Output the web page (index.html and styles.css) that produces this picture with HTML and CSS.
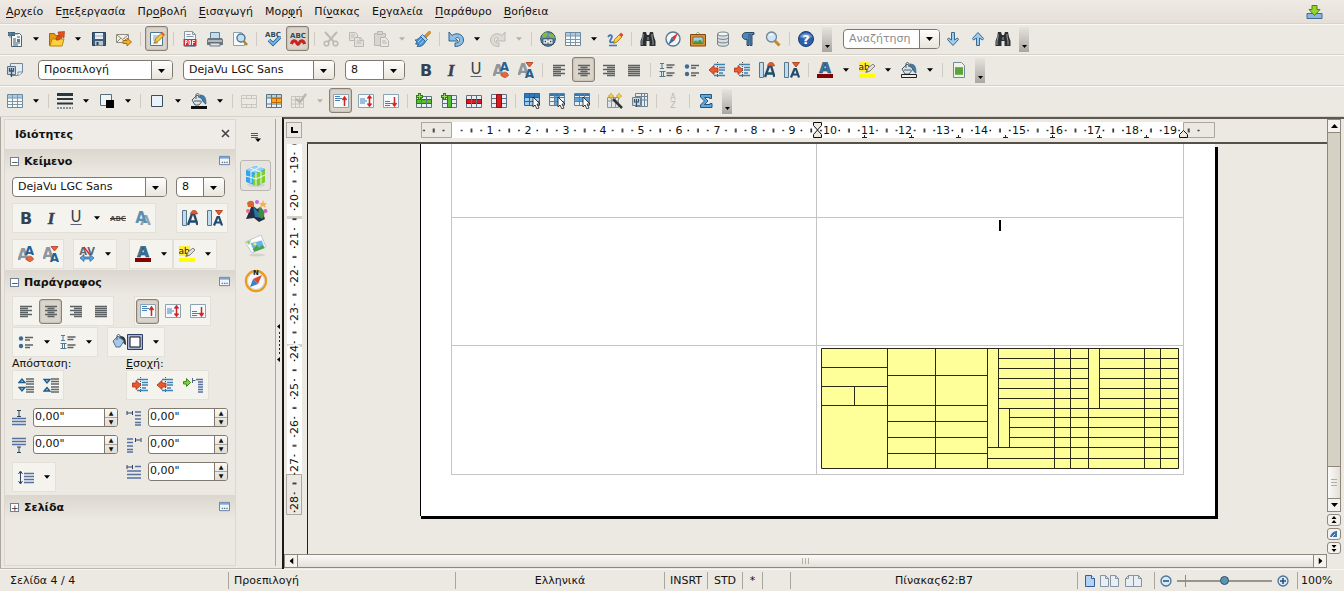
FILE: index.html
```html
<!DOCTYPE html>
<html lang="el">
<head>
<meta charset="utf-8">
<title>Writer</title>
<link rel="stylesheet" href="styles.css">
</head>
<body>
<svg class="sprite" aria-hidden="true">
<symbol id="arr" viewBox="0 0 7 4"><path d="M0 0h7L3.500 4z"/></symbol>
<symbol id="new" viewBox="0 0 16 16"><path d="M4.500 2.500h8l2 2v11h-10z" fill="#f4f8fa" stroke="#4b6272"/><path d="M1 1h7v4H1z" fill="#3f5e75"/><path d="M1 3h10M3 1v6" stroke="#6f8ca0"/><path d="M6 8h3M6 10h3M6 12h7M10 6h3M6 14h5" stroke="#44586a"/><path d="M10 8h3v3h-3z" fill="#4d7ea5"/></symbol>
<symbol id="open" viewBox="0 0 16 16"><path d="M.5 2.500h5l1 2h6v10h-12z" fill="#e59a15" stroke="#a86408"/><path d="M3 8h12l-2 7H1z" fill="#fcd13c" stroke="#c0820c"/><path d="M7 9c0-3 1-4 4-4L9.500 3.500 9 1l6.500-.5L15 7l-2-1.500-3 3.500z" fill="#e2521c" stroke="#a8300c" stroke-width=".6"/></symbol>
<symbol id="save" viewBox="0 0 16 16"><path d="M1.500 1.500h13v13h-13z" fill="#3f5e7b" stroke="#26415a"/><path d="M4 2h8v6H4z" fill="#e8eef2"/><path d="M4 10h8v4.500H4z" fill="#b9c6cf"/><path d="M5.500 11h2v3h-2z" fill="#2c4358"/><path d="M4 5h8" stroke="#9db2c2"/></symbol>
<symbol id="mail" viewBox="0 0 16 16"><path d="M.5 3.500h12v8H.5z" fill="#f3f0e6" stroke="#8a8a80"/><path d="M1 4l5.500 4.500L12 4M1 11l4-4M12 11L8.500 7.500" fill="none" stroke="#8a8a80"/><path d="M7 9.500h4V7l4.500 4-4.500 4v-2.500H7z" fill="#f5ae28" stroke="#ad6d08"/></symbol>
<symbol id="edit" viewBox="0 0 16 16"><path d="M1.500 1.500h12v13h-12z" fill="#f7fafc" stroke="#4f7492"/><path d="M4 5h7M4 7h5M4 9h3M4 12h5" stroke="#7da3be"/><path d="M5.500 12l1-4 6-6 2.500 2.500-6 6z" fill="#f8c93a" stroke="#946610" stroke-width=".8"/><path d="M12 3l1.500-2L16 3.500 14 5z" fill="#e4603c"/></symbol>
<symbol id="pdf" viewBox="0 0 16 16"><path d="M2.500.5h8l3 3v12h-11z" fill="#f5f7f8" stroke="#8598a5"/><path d="M10.500.5v3h3M4.500 3.500h4M4.500 5.500h7" stroke="#8598a5" fill="none"/><path d="M1.500 8h13v7h-13z" fill="#dc2a32"/><path d="M3.500 14V9.500h1.500v2H3.500M7 9.500v4h1.500v-4zM10.500 14V9.500H13M10.500 11.500h2" fill="none" stroke="#fff" stroke-width=".9"/></symbol>
<symbol id="print" viewBox="0 0 16 16"><path d="M3.500 1.500h9v7h-9z" fill="#c4dcec" stroke="#5f7f95"/><path d="M1 7h14l1 2v5H0V9z" fill="#6c7780"/><path d="M1 9h14v2H1z" fill="#b3babf"/><path d="M3 12h10v3H3z" fill="#dfe3e5" stroke="#525d66" stroke-width=".8"/></symbol>
<symbol id="preview" viewBox="0 0 16 16"><path d="M1.500 1.500h8l3 3v10h-11z" fill="#f8fafb" stroke="#8da1af"/><circle cx="9" cy="7" r="4" fill="#bfe0f5" stroke="#53748d" stroke-width="1.400"/><path d="M11.500 10l3.500 4" stroke="#b98224" stroke-width="2.600"/></symbol>
<symbol id="spell" viewBox="0 0 16 16"><text x="8" y="6" class="g" font-size="7" fill="#34495c">ABC</text><path d="M4 9l4 4 7-7" fill="none" stroke="#275f96" stroke-width="3.500"/><path d="M4 9l4 4 7-7" fill="none" stroke="#77b7e8" stroke-width="1.800"/></symbol>
<symbol id="autospell" viewBox="0 0 16 16"><text x="8" y="7" class="g" font-size="7" fill="#34495c">ABC</text><path d="M1.500 13c1-4 4-4 5-1.500s2 2.500 3 0 4-2.500 5 1.500" fill="none" stroke="#c72520" stroke-width="3.200"/></symbol>
<symbol id="cut" viewBox="0 0 16 16"><path d="M2 1l9 10M14 1L5 11" stroke="#bdbab4" stroke-width="2"/><circle cx="3.500" cy="12.500" r="2.300" fill="none" stroke="#bdbab4" stroke-width="1.600"/><circle cx="12.500" cy="12.500" r="2.300" fill="none" stroke="#bdbab4" stroke-width="1.600"/></symbol>
<symbol id="copy" viewBox="0 0 16 16"><g fill="#e4e1dc" stroke="#bcb9b3"><path d="M1.500 1.500h6l2 2v6h-8z"/><path d="M6.500 6.500h6l3 3v6h-9z"/><path d="M3 4h4M3 6h3M8.500 10h4M8.500 12h5M12 6.500v3h3"/></g></symbol>
<symbol id="paste" viewBox="0 0 16 16"><g fill="#d8d5cf" stroke="#b9b6b0"><path d="M1.500 2.500h11v12h-11z"/><path d="M4.500.5h5v3h-5z"/><path d="M7.500 6.500h5l3 3v6h-8z" fill="#eae8e3"/><path d="M9 10h4M9 12h5"/></g></symbol>
<symbol id="brush" viewBox="0 0 16 16"><path d="M14.500 0l1.500 1.500-4.500 5L9.500 4.500z" fill="#e09a28" stroke="#925e10" stroke-width=".6"/><path d="M7.500 3.500l5 5-2 2L5.500 5.500z" fill="#a8cfec" stroke="#28598c" stroke-width=".8"/><path d="M5.500 5.500l5 5C9 14 6 16 2 15.500l1.500-2L.5 13l1.500-2-2-2c2 0 4-1.500 5.500-3.500z" fill="#4a94d4" stroke="#235587" stroke-width=".8"/><path d="M3 11l3.500-3.500M5 13.500l3.500-4" stroke="#a6d0f2"/></symbol>
<symbol id="undo" viewBox="0 0 16 16"><path d="M1 1v9h9L7.500 7.500C9.500 5.500 12 7 11.500 9.500c-.5 2-2 2.500-4.500 2.500V15.500c5 0 8.500-2.500 8.500-6.500 0-6-7.500-8-11.500-4.500z" fill="#8bbfe5" stroke="#2d638f"/></symbol>
<symbol id="redo" viewBox="0 0 16 16"><path d="M15 1v9H6l2.500-2.500C6.500 5.500 4 7 4.500 9.500c.5 2 2 2.500 4.500 2.500V15.500C4 15.500.5 13 .5 9c0-6 7.500-8 11.500-4.500z" fill="#dedbd5" stroke="#bdbab4"/></symbol>
<symbol id="globe" viewBox="0 0 16 16"><circle cx="8" cy="8" r="7.300" fill="#5e91b8" stroke="#284b64"/><path d="M2 4c3-4 5-3 6-1L6 6 3 7zM9 3l4 0 2 4-3 0-3-2z" fill="#88b83e"/><path d="M2.500 7.500h11v6h-11z" fill="#2d3b45"/><path d="M4 9h3v3H4zM9 9h3v3H9zM6 10.500h4" fill="none" stroke="#e7ecef" stroke-width="1.300"/></symbol>
<symbol id="table" viewBox="0 0 16 16"><path d="M.5 1.500h15v13H.5z" fill="#f7fafc" stroke="#6d889c"/><path d="M1 2h14v3H1z" fill="#a9cbe8"/><path d="M.5 5h15M.5 8.500h15M.5 11.500h15M5.500 2v12M10.500 2v12" stroke="#7d96a8"/></symbol>
<symbol id="draw" viewBox="0 0 16 16"><path d="M1 6c3-4 5-1 3 2s-1 4 3 3" fill="none" stroke="#3977b5" stroke-width="1.800"/><path d="M2 14.500h8" stroke="#3977b5" stroke-width="1.500"/><path d="M6.500 12.500l1-4 5-5 2.500 2.500-5 5z" fill="#fbcf43" stroke="#9c6c12" stroke-width=".8"/><path d="M12 4l2-2.500L16.500 4 14.500 6z" fill="#dd4736"/></symbol>
<symbol id="bino" viewBox="0 0 16 16"><path d="M3 1h3l1 3h2l1-3h3l1 5 1.500 4v5H9.500v-5h-3v5H.5v-5L2 6z" fill="#2c3032"/><path d="M3 3v3l-1 4v4M12 3v3l1 4v4" stroke="#9ba0a3" fill="none"/><path d="M7 6h2v3H7z" fill="#666c70"/></symbol>
<symbol id="compass" viewBox="0 0 16 16"><circle cx="8" cy="8" r="7" fill="#f2f6f9" stroke="#5b7890" stroke-width="1.400"/><path d="M13 2L9.500 9.500 6.500 6.500z" fill="#dc342b"/><path d="M3 14l3.500-7.500 3 3z" fill="#356ca5"/></symbol>
<symbol id="gallery" viewBox="0 0 16 16"><path d="M5 4l3-3 3 3" fill="none" stroke="#a9aaa6"/><path d="M.5 3.500h15v11.500H.5z" fill="#dd932b" stroke="#7d480c"/><path d="M3 6h10v6.500H3z" fill="#9bd0f2" stroke="#744c1c" stroke-width=".7"/><path d="M3.500 12c1-3 3-3 4-1 2-4 4-2 5 1z" fill="#4d9a36"/></symbol>
<symbol id="db" viewBox="0 0 16 16"><path d="M2.500 3v10c0 3 11 3 11 0V3z" fill="#d9dee1" stroke="#78838b"/><ellipse cx="8" cy="3" rx="5.500" ry="2" fill="#f3f5f6" stroke="#78838b"/><path d="M2.500 6.500c0 2.500 11 2.500 11 0M2.500 10c0 2.500 11 2.500 11 0" fill="none" stroke="#78838b"/></symbol>
<symbol id="pil" viewBox="0 0 16 16"><path d="M14 1.500H6c-5 0-5 7 0 7h1v6h2v-11h1v11h2v-11h2z" fill="#4f86b5" stroke="#294c6b"/></symbol>
<symbol id="zoom" viewBox="0 0 16 16"><path d="M10 10l4.500 4.500" stroke="#c08a28" stroke-width="3"/><circle cx="6.500" cy="6" r="5" fill="#cfe5f6" stroke="#6d8596" stroke-width="1.300"/><path d="M4 5c1-2 3-2 4-1" fill="none" stroke="#fff"/></symbol>
<symbol id="help" viewBox="0 0 16 16"><circle cx="8" cy="8" r="7.500" fill="#2c5fa9" stroke="#173b74"/><path d="M2 6c1-5 11-5 12 0-3 2-9 2-12 0z" fill="#6993cb"/><text x="8" y="13" class="g" font-size="13" fill="#fff">?</text></symbol>
<symbol id="down" viewBox="0 0 16 16"><path d="M6.500 1.500h3v7.500l3-2 1 1.500L8 14.500 2.500 8.500l1-1.500 3 2z" fill="#a1cbea" stroke="#376992"/></symbol>
<symbol id="up" viewBox="0 0 16 16"><path d="M6.500 14.500h3V7l3 2 1-1.500L8 1.500 2.500 7.500l1 1.500 3-2z" fill="#a1cbea" stroke="#376992"/></symbol>
<symbol id="styles" viewBox="0 0 16 16"><path d="M3.500 1.500h12v9l-4 3h-8z" fill="#e6edf2" stroke="#73889a"/><path d="M15 10h-4v4" fill="#fff" stroke="#73889a"/><path d="M.5 4.500h8v8h-8z" fill="#c5d4df" stroke="#5b7488"/><path d="M2.500 6v3h4V6M4.500 6v9" fill="none" stroke="#395266" stroke-width="1.300"/></symbol>
<symbol id="bold" viewBox="0 0 16 16"><text x="8" y="14" class="g" font-size="16" fill="#34424f">B</text></symbol>
<symbol id="italic" viewBox="0 0 16 16"><text x="8" y="14" class="gi" font-size="17" fill="#34424f" stroke="#34424f" stroke-width=".5">I</text></symbol>
<symbol id="uline" viewBox="0 0 16 16"><text x="8" y="12" class="gn" font-size="15" fill="#34424f">U</text><path d="M2.500 14.500h11" stroke="#5d6670"/></symbol>
<symbol id="grow" viewBox="0 0 16 16"><text x="5" y="14" class="g" font-size="15" fill="#8d969d">A</text><text x="11.500" y="9" class="g" font-size="12" fill="#25608f">A</text><path d="M8 13.500c1-4.500 6.500-4.500 7.500 0L11.800 16z" fill="#e8643a" stroke="#b2391a" stroke-width=".6"/></symbol>
<symbol id="shrink" viewBox="0 0 16 16"><text x="5" y="13" class="g" font-size="15" fill="#8d969d">A</text><text x="11.500" y="15.500" class="g" font-size="12" fill="#25608f">A</text><path d="M8 .5h7L11.500 5z" fill="#e8643a" stroke="#b2391a" stroke-width=".8"/></symbol>
<symbol id="alL" viewBox="0 0 16 16"><path d="M2 3.500h12M2 5.500h8M2 7.500h12M2 9.500h8M2 11.500h12M2 13.500h8" stroke="#5c6164" stroke-width="1.300"/></symbol>
<symbol id="alC" viewBox="0 0 16 16"><path d="M2 3.500h12M4.500 5.500h7M2 7.500h12M4.500 9.500h7M2 11.500h12M4.500 13.500h7" stroke="#5c6164" stroke-width="1.300"/></symbol>
<symbol id="alR" viewBox="0 0 16 16"><path d="M2 3.500h12M6 5.500h8M2 7.500h12M6 9.500h8M2 11.500h12M6 13.500h8" stroke="#5c6164" stroke-width="1.300"/></symbol>
<symbol id="alJ" viewBox="0 0 16 16"><path d="M2 3.500h12M2 5.500h12M2 7.500h12M2 9.500h12M2 11.500h12M2 13.500h12" stroke="#5c6164" stroke-width="1.300"/></symbol>
<symbol id="num" viewBox="0 0 16 16"><path d="M1 1.500h4M1 6.500h4M3 1.500v5M.5 9.500h6M.5 14.500h6M2.500 9.500v5M4.500 9.500v5" stroke="#52798f"/><path d="M7.500 3h8M7.500 5.500h6M7.500 11h8M7.500 13.500h6" stroke="#5c6164" stroke-width="1.300"/></symbol>
<symbol id="bul" viewBox="0 0 16 16"><circle cx="3" cy="4.500" r="2.200" fill="#3d6c92"/><circle cx="3" cy="12" r="2.200" fill="#3d6c92"/><path d="M7 3.500h8M7 6h5M7 11h8M7 13.500h5" stroke="#5c6164" stroke-width="1.300"/></symbol>
<symbol id="indL" viewBox="0 0 16 16"><path d="M5 2.500h11M10 5.500h6M10 8h6M10 11h4M5 13.500h11" stroke="#3c84b8" stroke-width="1.600"/><path d="M8.500 0v16" stroke="#4c5961" stroke-dasharray="1 1"/><path d="M0 8l5-4.500v2.500h4v4H5v2.500z" fill="#e65b35" stroke="#a8320f" stroke-width=".8"/></symbol>
<symbol id="indR" viewBox="0 0 16 16"><path d="M5 2.500h11M10 5.500h6M10 8h6M10 11h4M5 13.500h11" stroke="#3c84b8" stroke-width="1.600"/><path d="M8.500 0v16" stroke="#4c5961" stroke-dasharray="1 1"/><path d="M9 8L4 3.500v2.500H.5v4H4v2.500z" fill="#e65b35" stroke="#a8320f" stroke-width=".8"/></symbol>
<symbol id="spU" viewBox="0 0 16 16"><path d="M.5.500h4v15h-4z" fill="#c2dcef" stroke="#58768c"/><path d="M6 15l4-11h2l3.500 11M8 11.500h6" fill="none" stroke="#214c6e" stroke-width="2.400"/><path d="M8.500 4c1-5 6-5 7 0z" fill="#e65b35" stroke="#a8320f" stroke-width=".6"/></symbol>
<symbol id="spD" viewBox="0 0 16 16"><path d="M.5.500h4v15h-4z" fill="#c2dcef" stroke="#58768c"/><path d="M7 15.500L10.500 7h1.500l3 8.500M8.500 12.500h5" fill="none" stroke="#214c6e" stroke-width="2.200"/><path d="M8.500.5h7L12 5z" fill="#e65b35" stroke="#a8320f" stroke-width=".8"/></symbol>
<symbol id="fcol" viewBox="0 0 16 16"><text x="8" y="11" class="g" font-size="15" fill="#3b759f" stroke="#21425d" stroke-width=".6">A</text><path d="M0 12h16v4H0z" fill="#860000"/></symbol>
<symbol id="hl" viewBox="0 0 16 16"><path d="M0 0h11v10H0z" fill="#ffee32"/><text x="5" y="8" class="gn" font-size="9" fill="#222">ab</text><path d="M7 10l2-4 5-4 2 2-5 5z" fill="#d9e1e6" stroke="#6f6650" stroke-width=".8"/><path d="M6 11l2-3 2 2z" fill="#9b7625"/><path d="M0 12h16v4H0z" fill="#ff0"/></symbol>
<symbol id="bucket" viewBox="0 0 16 16"><path d="M9 2c5 0 6 3 6 9-2 0-3-4-6-7z" fill="#3c7eb0" stroke="#275274" stroke-width=".6"/><path d="M1 7l5-5 6 5-4 5H4z" fill="#d8e3ea" stroke="#4a5c69"/><path d="M5 6V2c0-2 3-2 3 0v3M3 8h7" fill="none" stroke="#4a5c69"/><path d="M.5 12.500h15v3H.5z" fill="#eee" stroke="#222"/></symbol>
<symbol id="bucketb" viewBox="0 0 16 16"><path d="M9 2c5 0 6 3 6 9-2 0-3-4-6-7z" fill="#3c7eb0" stroke="#275274" stroke-width=".6"/><path d="M1 7l5-5 6 5-4 5H4z" fill="#d8e3ea" stroke="#4a5c69"/><path d="M5 6V2c0-2 3-2 3 0v3M3 8h7" fill="none" stroke="#4a5c69"/><path d="M0 13h16v3H0z" fill="#111"/></symbol>
<symbol id="doc" viewBox="0 0 16 16"><path d="M2.500.5h8l3 3v12h-11z" fill="#edf4ec" stroke="#6f8d94"/><path d="M4 5h8v8H4z" fill="#77b850"/><path d="M4 7h8M4 9h8M4 11h8" stroke="#498d29"/></symbol>
<symbol id="bst" viewBox="0 0 16 16"><path d="M0 1.500h16" stroke="#29373f" stroke-width="3"/><path d="M0 6h16M0 10.500h16" stroke="#29373f" stroke-width="2"/><path d="M0 15h16" stroke="#29373f" stroke-dasharray="2 1"/></symbol>
<symbol id="bcol" viewBox="0 0 16 16"><path d="M1.500 1.500h11v11h-11z" fill="#eff4f7" stroke="#5a6f7e"/><path d="M7 7h8v8H7z"/></symbol>
<symbol id="box" viewBox="0 0 16 16"><path d="M2.500 2.500h11v11h-11z" fill="#eaf1f8" stroke="#394e5e"/></symbol>
<symbol id="merge" viewBox="0 0 16 16"><g fill="none" stroke="#c9c6c0"><path d="M.5 2.500h15v12H.5zM.5 5.500h15M.5 11.500h15M5.500 2v4M10.500 2v4M5.500 11v4M10.500 11v4"/></g></symbol>
<symbol id="split" viewBox="0 0 16 16"><path d="M.5 1.500h15v13H.5z" fill="#e8f0f6" stroke="#5d7484"/><path d="M1 2h14v3H1z" fill="#b7cfdf"/><path d="M5.500 2v12M10.500 2v12M.5 5h15M.5 11h15" stroke="#5d7484"/><path d="M5.500 5.500h10v4h-10z" fill="#ffa51d" stroke="#ba6c00"/><path d="M10.500 5v5" stroke="#ba6c00"/></symbol>
<symbol id="opt" viewBox="0 0 16 16"><path d="M.5 3.500h12v11H.5zM.5 7h12M.5 11h12M4.500 4v10M8.500 4v10" fill="none" stroke="#c6c3bd"/><path d="M5 6l4 3 6-8" fill="none" stroke="#b9b6b0" stroke-width="2.500"/></symbol>
<symbol id="vt" viewBox="0 0 16 16"><path d="M.5 1.500h15v13H.5z" fill="#f6fafc" stroke="#8ea3b2"/><path d="M2 3.500h5M2 5.500h7M2 7.500h5" stroke="#4382bd"/><path d="M11.500 13V5M9.500 7l2-3 2 3" fill="none" stroke="#d22424" stroke-width="1.500"/></symbol>
<symbol id="vm" viewBox="0 0 16 16"><path d="M.5 1.500h15v13H.5z" fill="#f6fafc" stroke="#8ea3b2"/><path d="M2 6h5M2 8h7M2 10h5" stroke="#4382bd"/><path d="M11.500 13V3M9.500 5.500l2-2.500 2 2.500M9.500 10.500l2 2.500 2-2.500" fill="none" stroke="#d22424" stroke-width="1.500"/></symbol>
<symbol id="vb" viewBox="0 0 16 16"><path d="M.5 1.500h15v13H.5z" fill="#f6fafc" stroke="#8ea3b2"/><path d="M2 8.500h5M2 10.500h7M2 12.500h5" stroke="#4382bd"/><path d="M11.500 4v8M9.500 10l2 3 2-3" fill="none" stroke="#d22424" stroke-width="1.500"/></symbol>
<symbol id="ir" viewBox="0 0 16 16"><path d="M.5 3.500h15v11H.5z" fill="#e7eff4" stroke="#60727e"/><path d="M.5 6.500h15v4H.5z" fill="#56bd31" stroke="#277811"/><path d="M5.500 4v11M10.500 4v11" stroke="#60727e"/><path d="M0 3.500h7M3.500 0v7" stroke="#2c7d12" stroke-width="3"/><path d="M1 3.500h5M3.500 1v5" stroke="#93dd55"/></symbol>
<symbol id="ic" viewBox="0 0 16 16"><path d="M1.500 2.500h14v12h-14z" fill="#e7eff4" stroke="#60727e"/><path d="M1 6.500h14M1 10.500h14" stroke="#60727e"/><path d="M6.500 2.500h4v12h-4z" fill="#56bd31" stroke="#277811"/><path d="M0 3.500h7M3.500 0v7" stroke="#2c7d12" stroke-width="3"/><path d="M1 3.500h5M3.500 1v5" stroke="#93dd55"/></symbol>
<symbol id="dr" viewBox="0 0 16 16"><path d="M.5 2.500h15v12H.5z" fill="#e7eff4" stroke="#60727e"/><path d="M.5 6.500h15v4H.5z" fill="#d81a21" stroke="#8e0d12"/><path d="M5.500 3v11M10.500 3v11" stroke="#60727e"/></symbol>
<symbol id="dc" viewBox="0 0 16 16"><path d="M.5 1.500h15v13H.5z" fill="#e7eff4" stroke="#60727e"/><path d="M1 5.500h14M1 10.500h14" stroke="#60727e"/><path d="M5.500 1.500h5v13h-5z" fill="#d81a21" stroke="#8e0d12"/></symbol>
<symbol id="st" viewBox="0 0 16 16"><path d="M.5.500h15v12H.5z" fill="#9fcbee" stroke="#24639d"/><path d="M1 1h14v3H1z" fill="#2e79bc"/><path d="M1 4.500h14M1 8.500h14M5.500 1v12M10.500 1v12" stroke="#24639d"/><path d="M9 4v10l2-2 2 4 2-1-2-4h3z" fill="#fff" stroke="#111" stroke-width=".8"/></symbol>
<symbol id="sc" viewBox="0 0 16 16"><path d="M.5.500h15v12H.5z" fill="#e9f0f5" stroke="#607e95"/><path d="M5 1h6v11H5z" fill="#5ca4dc"/><path d="M1 1h14v2H1z" fill="#2e79bc"/><path d="M1 4.500h14M1 8.500h14M5.500 1v12M10.500 1v12" stroke="#607e95"/><path d="M9 4v10l2-2 2 4 2-1-2-4h3z" fill="#fff" stroke="#111" stroke-width=".8"/></symbol>
<symbol id="sr" viewBox="0 0 16 16"><path d="M.5.500h15v12H.5z" fill="#e9f0f5" stroke="#607e95"/><path d="M1 1h14v2H1z" fill="#2e79bc"/><path d="M1 5h14v4H1z" fill="#5ca4dc"/><path d="M1 4.500h14M1 8.500h14M5.500 1v12M10.500 1v12" stroke="#607e95"/><path d="M9 4v10l2-2 2 4 2-1-2-4h3z" fill="#fff" stroke="#111" stroke-width=".8"/></symbol>
<symbol id="wand" viewBox="0 0 16 16"><path d="M.5 4.500h11v10H.5z" fill="#e0e5e8" stroke="#8797a3"/><path d="M1 8h11M4.500 5v9M8.500 5v9" stroke="#8797a3"/><path d="M6 6l9 9" stroke="#333" stroke-width="2.500"/><path d="M4 0l1 2 2 1-2 1-1 2-1-2-2-1 2-1zM12 0l1 2 2 1-2 1-1 2-1-2-2-1 2-1z" fill="#f8cf3b" stroke="#c38f0e" stroke-width=".5"/></symbol>
<symbol id="tp" viewBox="0 0 16 16"><path d="M3.500.500h12v13h-12z" fill="#e5edf3" stroke="#6c8293"/><path d="M4 3.500h11M4 7h11M9.500 1v12M12.500 1v12" stroke="#6c8293"/><path d="M.5 4.500h8v8h-8z" fill="#cbd8e1" stroke="#6c8293"/><path d="M2.500 6v3h4V6M4.500 6v8" fill="none" stroke="#395266" stroke-width="1.200"/></symbol>
<symbol id="az" viewBox="0 0 16 16"><text x="8" y="7" class="gn" font-size="8" fill="#b9b6b0">A</text><text x="8" y="15" class="gn" font-size="8" fill="#b9b6b0">Z</text></symbol>
<symbol id="sigma" viewBox="0 0 16 16"><path d="M2.500 1.500h11v4h-2v-1H6.500L10 8l-3.500 3.500H12v-1h2v4H2.500v-2.500L6.500 8 2.500 4z" fill="#5fa9dc" stroke="#1f5785"/></symbol>
<symbol id="strike" viewBox="0 0 16 16"><text x="8" y="11" class="g" font-size="7" fill="#555">ABC</text><path d="M0 8.500h16" stroke="#333"/></symbol>
<symbol id="shad" viewBox="0 0 16 16"><text x="10.500" y="15" class="g" font-size="14" fill="#8fa2b0">A</text><text x="6" y="13" class="g" font-size="15" fill="#5a8fb5">A</text></symbol>
<symbol id="av" viewBox="0 0 16 16"><text x="4" y="9" class="g" font-size="10" fill="#606a72">A</text><text x="12" y="9" class="g" font-size="10" fill="#606a72">V</text><path d="M5 1l6 8" stroke="#d6282f" stroke-width="1.300"/><path d="M1 12l4-3.500V11h6V8.500l4 3.500-4 3.500V13H5v2.500z" fill="#5ba4dc" stroke="#235f92" stroke-width=".7"/></symbol>
<symbol id="bg" viewBox="0 0 32 16"><path d="M8 2c5 0 6 3 6 9-2 0-3-4-6-7z" fill="#263746"/><path d="M1 7l5-5 6 5-4 6H4z" fill="#a8c6e6" stroke="#4d7199"/><path d="M5 6V2c0-2 3-2 3 0v3" fill="none" stroke="#4a5c69"/><path d="M15.500.5h15v15h-15z" fill="#a9b6d6" stroke="#2c3d66"/><path d="M18 3h10v10H18z" fill="#fff" stroke="#111"/></symbol>
<symbol id="psi" viewBox="0 0 16 16"><path d="M8 2h8M8 4.500h8M8 7h8M8 10h8M8 12.500h8M8 15h8" stroke="#63686c" stroke-width="1.300"/><path d="M1 5.500L4 2l3 3.500zM1 10.500h6L4 14z" fill="#9cc7e8" stroke="#205b8c" stroke-width="1.300"/></symbol>
<symbol id="psd" viewBox="0 0 16 16"><path d="M8 2h8M8 4.500h8M8 7h8M8 10h8M8 12.500h8M8 15h8" stroke="#63686c" stroke-width="1.300"/><path d="M1 2.500h6L4 6zM1 14l3-3.500L7 14z" fill="#9cc7e8" stroke="#205b8c" stroke-width="1.300"/></symbol>
<symbol id="hang" viewBox="0 0 20 16"><path d="M.5 4.500h3V1.500l4 4-4 4V7h-3z" fill="#83cf45" stroke="#3b8a16"/><path d="M9.500 1v5M9.500 3.500h3" stroke="#4d6685"/><path d="M13 2.500h7M15 5h5M15 7.500h5M15 10h5M15 12.500h5M15 15h5" stroke="#5471a0" stroke-width="1.500"/></symbol>
<symbol id="fab" viewBox="0 0 16 16"><path d="M1 8.500h14M1 11.500h14M1 14.500h14" stroke="#5471a0" stroke-width="1.700"/><path d="M6 .5h4M6 6.500h4M8 0v7" stroke="#2e4468"/></symbol>
<symbol id="fbe" viewBox="0 0 16 16"><path d="M1 1.500h14M1 4.500h14M1 7.500h14" stroke="#5471a0" stroke-width="1.700"/><path d="M6 10h4M6 15.500h4M8 10v6" stroke="#2e4468"/></symbol>
<symbol id="fle" viewBox="0 0 16 16"><path d="M9 2h6M9 5.500h6M9 9h6M9 12.500h6M9 15h6" stroke="#5471a0" stroke-width="1.500"/><path d="M1 1v4M6.500 1v4M1 3h5" stroke="#2e4468"/></symbol>
<symbol id="fri" viewBox="0 0 16 16"><path d="M1 2h6M1 5.500h6M1 9h6M1 12.500h6M1 15h6" stroke="#5471a0" stroke-width="1.500"/><path d="M9.500 1v4M15 1v4M9.500 3h5" stroke="#2e4468"/></symbol>
<symbol id="ffi" viewBox="0 0 16 16"><path d="M9 2.500h6M1 7h14M1 10.500h14M1 14h14" stroke="#5471a0" stroke-width="1.500"/><path d="M1 1v4M6.500 1v4M1 3h5" stroke="#2e4468"/></symbol>
<symbol id="lsp" viewBox="0 0 16 16"><path d="M6 4.500h10M6 7.500h10M6 10.500h10M6 13.500h10" stroke="#5471a0" stroke-width="1.600"/><path d="M2.500 3v11M.5 5l2-3 2 3M.5 12l2 3 2-3" fill="none" stroke="#2e4468"/></symbol>
<symbol id="dlg" viewBox="0 0 12 12"><path d="M.5 1.500h11v9H.5z" fill="#f1f5fb" stroke="#5879a8"/><path d="M1 2h10v2H1z" fill="#7ea5d8"/><path d="M3 8h1.500M5.500 8H7M8 8h1.500" stroke="#345"/></symbol>
<symbol id="upd" viewBox="0 0 16 16"><path d="M.5 9.500h15v5H.5z" fill="#8db5da" stroke="#416894"/><path d="M5.500 1.500h5v4h3L8 11.500 2.500 5.500h3z" fill="#96d32c" stroke="#4b8609"/></symbol>
<symbol id="cube" viewBox="0 0 24 24"><ellipse cx="12" cy="21" rx="9" ry="2" fill="#d5d2cc"/><path d="M2 6l9-4 10 3v13l-8 4-11-4z" fill="#36a5e8"/><path d="M12 9l9-3v12l-9 4-3-1v-9z" fill="#7ed028"/><path d="M2 6l9-4 10 3-9 4z" fill="#8fd4f8"/><path d="M2 12l10 3 9-4M12 9v13M7 7v12M6 4l11 4v12M16 3L7 7.500" fill="none" stroke="#f0f8fa"/></symbol>
<symbol id="sty" viewBox="0 0 24 24"><path d="M2 20l6-14 5 4 4-2 4 12-6 3-5-4z" fill="#1d3044"/><path d="M9 7l5 6 5 6-8-1z" fill="#2d70ad"/><path d="M15 8c6 2 7 8 3 12l-4-4z" fill="#3c8f42"/><path d="M3 4c2-3 6-3 7 0v4L4 8z" fill="#d9652b"/><circle cx="13" cy="3" r="2" fill="#c667d8"/><circle cx="4" cy="12" r="2" fill="#ea6791"/><circle cx="21.500" cy="12" r="2" fill="#d75dc0"/><path d="M19 1l1 3h3l-2 2 1 3-3-2-3 2 1-3-2-2h3z" fill="#f7ae4c"/></symbol>
<symbol id="gal" viewBox="0 0 24 24"><ellipse cx="13" cy="21" rx="8" ry="1.500" fill="#d5d2cc"/><path d="M1 8L17 1l5 12L8 19z" fill="#fff" stroke="#c1c9cc"/><path d="M6 9l12-3 3 8-11 4z" fill="#65b6e8" stroke="#edf1f2"/><path d="M9 15l4-4 2 3 3-3 3 3-11 4z" fill="#4aa344"/><path d="M2 8l5-2-2 5z" fill="#8fca6b"/><circle cx="11" cy="10" r="1.500" fill="#ffe568"/></symbol>
<symbol id="nav" viewBox="0 0 24 24"><circle cx="12" cy="12" r="10" fill="#f6f8fa" stroke="#ec9b1c" stroke-width="2.400"/><circle cx="12" cy="12" r="8.500" fill="none" stroke="#cdd3d8"/><path d="M18 6l-4 9-5-5z" fill="#e0472e"/><path d="M6 18l3-8 5 5z" fill="#3f7fc0"/><text x="12" y="6" class="g" font-size="7" fill="#222">N</text></symbol>
</svg>

<nav class="menu" aria-label="Μενού">
<button><u>Α</u>ρχείο</button><button>Ε<u>π</u>εξεργασία</button><button>Πρ<u>ο</u>βολή</button><button><u>Ε</u>ισαγωγή</button><button>Μορ<u>φ</u>ή</button><button>Πί<u>ν</u>ακας</button><button>Ε<u>ρ</u>γαλεία</button><button><u>Π</u>αράθυρο</button><button><u>Β</u>οήθεια</button>
<button class="update" aria-label="Ενημέρωση"><svg><use href="#upd"/></svg></button>
</nav>

<div class="bar" role="toolbar" aria-label="Βασική">
<button class="b" aria-label="Νέο"><svg><use href="#new"/></svg></button><button class="a" aria-label="Νέο, επιλογές"><svg><use href="#arr"/></svg></button>
<button class="b" aria-label="Άνοιγμα"><svg><use href="#open"/></svg></button><button class="a" aria-label="Πρόσφατα"><svg><use href="#arr"/></svg></button>
<button class="b" aria-label="Αποθήκευση"><svg><use href="#save"/></svg></button><button class="b" aria-label="Αποστολή"><svg><use href="#mail"/></svg></button><i></i>
<button class="b on" aria-label="Επεξεργασία αρχείου"><svg><use href="#edit"/></svg></button><i></i>
<button class="b" aria-label="PDF"><svg><use href="#pdf"/></svg></button><button class="b" aria-label="Εκτύπωση"><svg><use href="#print"/></svg></button><button class="b" aria-label="Προεπισκόπηση"><svg><use href="#preview"/></svg></button><i></i>
<button class="b" aria-label="Ορθογραφία"><svg><use href="#spell"/></svg></button><button class="b on" aria-label="Αυτόματος έλεγχος"><svg><use href="#autospell"/></svg></button><i></i>
<button class="b" aria-label="Αποκοπή" disabled><svg><use href="#cut"/></svg></button><button class="b" aria-label="Αντιγραφή" disabled><svg><use href="#copy"/></svg></button><button class="b" aria-label="Επικόλληση" disabled><svg><use href="#paste"/></svg></button><button class="a" aria-label="Ειδική επικόλληση" disabled><svg><use href="#arr"/></svg></button>
<button class="b" aria-label="Πινέλο"><svg><use href="#brush"/></svg></button><i></i>
<button class="b" aria-label="Αναίρεση"><svg><use href="#undo"/></svg></button><button class="a" aria-label="Λίστα αναίρεσης"><svg><use href="#arr"/></svg></button>
<button class="b" aria-label="Επανάληψη" disabled><svg><use href="#redo"/></svg></button><button class="a" aria-label="Λίστα επανάληψης" disabled><svg><use href="#arr"/></svg></button><i></i>
<button class="b" aria-label="Υπερσύνδεσμος"><svg><use href="#globe"/></svg></button><button class="b" aria-label="Πίνακας"><svg><use href="#table"/></svg></button><button class="a" aria-label="Εισαγωγή πίνακα"><svg><use href="#arr"/></svg></button>
<button class="b" aria-label="Σχεδίαση"><svg><use href="#draw"/></svg></button><i></i>
<button class="b" aria-label="Εύρεση"><svg><use href="#bino"/></svg></button><button class="b" aria-label="Πλοηγός"><svg><use href="#compass"/></svg></button><button class="b" aria-label="Συλλογή"><svg><use href="#gallery"/></svg></button><button class="b" aria-label="Πηγές δεδομένων"><svg><use href="#db"/></svg></button><button class="b" aria-label="Μη εκτυπώσιμοι"><svg><use href="#pil"/></svg></button><button class="b" aria-label="Εστίαση"><svg><use href="#zoom"/></svg></button><i></i>
<button class="b" aria-label="Βοήθεια"><svg><use href="#help"/></svg></button><button class="more" aria-label="Περισσότερα"><svg><use href="#arr"/></svg></button>
<span class="combo search"><input type="text" placeholder="Αναζήτηση" aria-label="Αναζήτηση"><button aria-label="Ιστορικό"><svg><use href="#arr"/></svg></button></span>
<button class="b" aria-label="Επόμενο"><svg><use href="#down"/></svg></button><button class="b" aria-label="Προηγούμενο"><svg><use href="#up"/></svg></button><button class="b" aria-label="Εύρεση και αντικατάσταση"><svg><use href="#bino"/></svg></button><button class="more" aria-label="Περισσότερα"><svg><use href="#arr"/></svg></button>
</div>

<div class="bar" role="toolbar" aria-label="Μορφοποίηση">
<button class="b" aria-label="Τεχνοτροπίες"><svg><use href="#styles"/></svg></button>
<span class="combo w-style"><select aria-label="Τεχνοτροπία"><option>Προεπιλογή</option></select><svg><use href="#arr"/></svg></span>
<span class="combo w-font"><select aria-label="Γραμματοσειρά"><option>DejaVu LGC Sans</option></select><svg><use href="#arr"/></svg></span>
<span class="combo w-size"><select aria-label="Μέγεθος"><option>8</option></select><svg><use href="#arr"/></svg></span>
<button class="b" aria-label="Έντονα"><svg><use href="#bold"/></svg></button><button class="b" aria-label="Πλάγια"><svg><use href="#italic"/></svg></button><button class="b" aria-label="Υπογράμμιση"><svg><use href="#uline"/></svg></button><button class="b" aria-label="Μεγέθυνση"><svg><use href="#grow"/></svg></button><button class="b" aria-label="Σμίκρυνση"><svg><use href="#shrink"/></svg></button><i></i>
<button class="b" aria-label="Αριστερά"><svg><use href="#alL"/></svg></button><button class="b on" aria-label="Κέντρο"><svg><use href="#alC"/></svg></button><button class="b" aria-label="Δεξιά"><svg><use href="#alR"/></svg></button><button class="b" aria-label="Πλήρης"><svg><use href="#alJ"/></svg></button><i></i>
<button class="b" aria-label="Αρίθμηση"><svg><use href="#num"/></svg></button><button class="b" aria-label="Κουκκίδες"><svg><use href="#bul"/></svg></button><button class="b" aria-label="Μείωση εσοχής"><svg><use href="#indL"/></svg></button><button class="b" aria-label="Αύξηση εσοχής"><svg><use href="#indR"/></svg></button><button class="b" aria-label="Μεγαλύτερα"><svg><use href="#spU"/></svg></button><button class="b" aria-label="Μικρότερα"><svg><use href="#spD"/></svg></button><i></i>
<button class="b" aria-label="Χρώμα"><svg><use href="#fcol"/></svg></button><button class="a" aria-label="Επιλογή χρώματος"><svg><use href="#arr"/></svg></button>
<button class="b" aria-label="Τονισμός"><svg><use href="#hl"/></svg></button><button class="a" aria-label="Επιλογή τονισμού"><svg><use href="#arr"/></svg></button>
<button class="b" aria-label="Παρασκήνιο"><svg><use href="#bucket"/></svg></button><button class="a" aria-label="Επιλογή παρασκηνίου"><svg><use href="#arr"/></svg></button><i></i>
<button class="b" aria-label="Παράγραφος"><svg><use href="#doc"/></svg></button><button class="more" aria-label="Περισσότερα"><svg><use href="#arr"/></svg></button>
</div>

<div class="bar" role="toolbar" aria-label="Πίνακας">
<button class="b" aria-label="Πίνακας"><svg><use href="#table"/></svg></button><button class="a" aria-label="Επιλογές πίνακα"><svg><use href="#arr"/></svg></button><i></i>
<button class="b" aria-label="Στυλ γραμμής"><svg><use href="#bst"/></svg></button><button class="a" aria-label="Επιλογές γραμμής"><svg><use href="#arr"/></svg></button>
<button class="b" aria-label="Χρώμα γραμμής"><svg><use href="#bcol"/></svg></button><button class="a" aria-label="Επιλογές χρώματος"><svg><use href="#arr"/></svg></button><i></i>
<button class="b" aria-label="Περιγράμματα"><svg><use href="#box"/></svg></button><button class="a" aria-label="Επιλογές περιγράμματος"><svg><use href="#arr"/></svg></button>
<button class="b" aria-label="Παρασκήνιο"><svg><use href="#bucketb"/></svg></button><button class="a" aria-label="Επιλογές παρασκηνίου"><svg><use href="#arr"/></svg></button><i></i>
<button class="b" aria-label="Συγχώνευση" disabled><svg><use href="#merge"/></svg></button><button class="b" aria-label="Διαίρεση"><svg><use href="#split"/></svg></button><button class="b" aria-label="Βελτιστοποίηση" disabled><svg><use href="#opt"/></svg></button><button class="a" aria-label="Επιλογές" disabled><svg><use href="#arr"/></svg></button>
<button class="b on" aria-label="Πάνω"><svg><use href="#vt"/></svg></button><button class="b" aria-label="Μέση"><svg><use href="#vm"/></svg></button><button class="b" aria-label="Κάτω"><svg><use href="#vb"/></svg></button><i></i>
<button class="b" aria-label="Εισαγωγή γραμμής"><svg><use href="#ir"/></svg></button><button class="b" aria-label="Εισαγωγή στήλης"><svg><use href="#ic"/></svg></button><button class="b" aria-label="Διαγραφή γραμμής"><svg><use href="#dr"/></svg></button><button class="b" aria-label="Διαγραφή στήλης"><svg><use href="#dc"/></svg></button><i></i>
<button class="b" aria-label="Επιλογή πίνακα"><svg><use href="#st"/></svg></button><button class="b" aria-label="Επιλογή στήλης"><svg><use href="#sc"/></svg></button><button class="b" aria-label="Επιλογή γραμμής"><svg><use href="#sr"/></svg></button><i></i>
<button class="b" aria-label="Αυτόματη μορφή"><svg><use href="#wand"/></svg></button><button class="b" aria-label="Ιδιότητες πίνακα"><svg><use href="#tp"/></svg></button><i></i>
<button class="b" aria-label="Ταξινόμηση" disabled><svg><use href="#az"/></svg></button><i></i>
<button class="b" aria-label="Άθροισμα"><svg><use href="#sigma"/></svg></button><button class="more" aria-label="Περισσότερα"><svg><use href="#arr"/></svg></button>
</div>

<div class="work">
<aside class="side">
<div class="deck">
<header class="title"><h1>Ιδιότητες</h1><button aria-label="Κλείσιμο"><svg viewBox="0 0 9 9"><path d="M1 1l7 7M8 1L1 8" stroke="#444" stroke-width="1.600"/></svg></button></header>
<section>
<header class="sec"><button class="tog" aria-label="Σύμπτυξη">−</button><h2>Κείμενο</h2><button class="dlg" aria-label="Διάλογος"><svg><use href="#dlg"/></svg></button></header>
<div class="body">
<div class="row top"><span class="combo w-sfont"><select aria-label="Γραμματοσειρά"><option>DejaVu LGC Sans</option></select><svg><use href="#arr"/></svg></span><span class="combo w-ssize"><select aria-label="Μέγεθος"><option>8</option></select><svg><use href="#arr"/></svg></span></div>
<div class="row"><div class="grp"><button class="b" aria-label="Έντονα"><svg><use href="#bold"/></svg></button><button class="b" aria-label="Πλάγια"><svg><use href="#italic"/></svg></button><button class="b" aria-label="Υπογράμμιση"><svg><use href="#uline"/></svg></button><button class="a" aria-label="Επιλογές"><svg><use href="#arr"/></svg></button><button class="b" aria-label="Διαγράμμιση"><svg><use href="#strike"/></svg></button><button class="b" aria-label="Σκιά"><svg><use href="#shad"/></svg></button></div>
<div class="grp g20"><button class="b" aria-label="Μεγαλύτερα"><svg><use href="#spU"/></svg></button><button class="b" aria-label="Μικρότερα"><svg><use href="#spD"/></svg></button></div></div>
<div class="row"><div class="grp"><button class="b" aria-label="Εκθέτης"><svg><use href="#grow"/></svg></button><button class="b" aria-label="Δείκτης"><svg><use href="#shrink"/></svg></button></div>
<div class="grp g9"><button class="b" aria-label="Διάκενο"><svg><use href="#av"/></svg></button><button class="a" aria-label="Επιλογές"><svg><use href="#arr"/></svg></button></div>
<div class="grp g12"><button class="b" aria-label="Χρώμα"><svg><use href="#fcol"/></svg></button><button class="a" aria-label="Επιλογές"><svg><use href="#arr"/></svg></button></div>
<div class="grp"><button class="b" aria-label="Τονισμός"><svg><use href="#hl"/></svg></button><button class="a" aria-label="Επιλογές"><svg><use href="#arr"/></svg></button></div></div>
</div>
</section>
<section>
<header class="sec"><button class="tog" aria-label="Σύμπτυξη">−</button><h2>Παράγραφος</h2><button class="dlg" aria-label="Διάλογος"><svg><use href="#dlg"/></svg></button></header>
<div class="body tight">
<div class="row"><div class="grp"><button class="b" aria-label="Αριστερά"><svg><use href="#alL"/></svg></button><button class="b on" aria-label="Κέντρο"><svg><use href="#alC"/></svg></button><button class="b" aria-label="Δεξιά"><svg><use href="#alR"/></svg></button><button class="b" aria-label="Πλήρης"><svg><use href="#alJ"/></svg></button></div>
<div class="grp g20"><button class="b on" aria-label="Πάνω"><svg><use href="#vt"/></svg></button><button class="b" aria-label="Μέση"><svg><use href="#vm"/></svg></button><button class="b" aria-label="Κάτω"><svg><use href="#vb"/></svg></button></div></div>
<div class="row"><div class="grp"><button class="b" aria-label="Κουκκίδες"><svg><use href="#bul"/></svg></button><button class="a" aria-label="Επιλογές"><svg><use href="#arr"/></svg></button><button class="b" aria-label="Αρίθμηση"><svg><use href="#num"/></svg></button><button class="a" aria-label="Επιλογές"><svg><use href="#arr"/></svg></button></div>
<div class="grp g9"><button class="b wide" aria-label="Παρασκήνιο"><svg><use href="#bg"/></svg></button><button class="a" aria-label="Επιλογές"><svg><use href="#arr"/></svg></button></div></div>
<div class="cols">
<div class="col"><h3>Απόσταση:</h3>
<div class="grp"><button class="b" aria-label="Αύξηση"><svg><use href="#psi"/></svg></button><button class="b" aria-label="Μείωση"><svg><use href="#psd"/></svg></button></div>
<label class="fld"><svg><use href="#fab"/></svg><span class="spin"><input type="text" value="0,00&quot;" aria-label="Πάνω"><span><button aria-label="Αύξηση">▲</button><button aria-label="Μείωση">▼</button></span></span></label>
<label class="fld"><svg><use href="#fbe"/></svg><span class="spin"><input type="text" value="0,00&quot;" aria-label="Κάτω"><span><button aria-label="Αύξηση">▲</button><button aria-label="Μείωση">▼</button></span></span></label>
<div class="grp"><button class="b" aria-label="Διάστιχο"><svg><use href="#lsp"/></svg></button><button class="a" aria-label="Επιλογές"><svg><use href="#arr"/></svg></button></div></div>
<div class="col"><h3><u>Ε</u>σοχή:</h3>
<div class="grp"><button class="b" aria-label="Αύξηση"><svg><use href="#indR"/></svg></button><button class="b" aria-label="Μείωση"><svg><use href="#indL"/></svg></button><button class="b hang" aria-label="Προεξοχή"><svg><use href="#hang"/></svg></button></div>
<label class="fld"><svg><use href="#fle"/></svg><span class="spin"><input type="text" value="0,00&quot;" aria-label="Αριστερά"><span><button aria-label="Αύξηση">▲</button><button aria-label="Μείωση">▼</button></span></span></label>
<label class="fld"><svg><use href="#fri"/></svg><span class="spin"><input type="text" value="0,00&quot;" aria-label="Δεξιά"><span><button aria-label="Αύξηση">▲</button><button aria-label="Μείωση">▼</button></span></span></label>
<label class="fld"><svg><use href="#ffi"/></svg><span class="spin"><input type="text" value="0,00&quot;" aria-label="Πρώτη γραμμή"><span><button aria-label="Αύξηση">▲</button><button aria-label="Μείωση">▼</button></span></span></label></div>
</div>
</div>
</section>
<section><header class="sec"><button class="tog" aria-label="Ανάπτυξη">+</button><h2>Σελίδα</h2><button class="dlg" aria-label="Διάλογος"><svg><use href="#dlg"/></svg></button></header></section>
</div>
<div class="tabs">
<button class="cfg" aria-label="Ρυθμίσεις"><svg viewBox="0 0 10 10"><path d="M0 1.500h7M0 3.500h7M0 5.500h7" stroke="#555"/><path d="M4 6.500h6L7 10z"/></svg></button>
<button class="tab cur" aria-label="Ιδιότητες"><svg><use href="#cube"/></svg></button><button class="tab" aria-label="Τεχνοτροπίες"><svg><use href="#sty"/></svg></button><button class="tab" aria-label="Συλλογή"><svg><use href="#gal"/></svg></button><button class="tab" aria-label="Πλοηγός"><svg><use href="#nav"/></svg></button>
</div>
<div class="split"><svg viewBox="0 0 5 40"><path d="M4 1v5L1 3.500zM4 34v5l-3-2.500z"/><path d="M3.500 9v23" stroke="#222" stroke-dasharray="2 2"/></svg></div>
</aside>

<main class="edit">
<div class="corner"><button aria-label="Στηλοθέτης"><svg viewBox="0 0 14 14"><path d="M5 4v5h6" fill="none" stroke="#000" stroke-width="2"/></svg></button></div>
<div class="hr"><svg width="795" height="23" viewBox="0 0 795 23">
<defs><pattern id="ht" x="32.500" width="37.750" height="23" patternUnits="userSpaceOnUse"><path d="M8.500 11.500h1.500M28 11.500h1.500" stroke="#000" stroke-width="1.400"/><path d="M19 9.500v4" stroke="#000" stroke-width="1.400"/></pattern></defs>
<path d="M31 3h732v16H31z" fill="#fff"/><path d="M1.500 3.500h30v15h-30zM763.500 3.500h31v15h-31z" fill="#ece9e2" stroke="#aaa79f"/>
<path d="M2 3h778v16H2z" fill="url(#ht)"/>
<g><text x="70" y="15">1</text><text x="108" y="15">2</text><text x="146" y="15">3</text><text x="183" y="15">4</text><text x="221" y="15">5</text><text x="259" y="15">6</text><text x="297" y="15">7</text><text x="334" y="15">8</text><text x="372" y="15">9</text><text x="410" y="15">10</text><text x="448" y="15">11</text><text x="485" y="15">12</text><text x="523" y="15">13</text><text x="561" y="15">14</text><text x="599" y="15">15</text><text x="636" y="15">16</text><text x="674" y="15">17</text><text x="712" y="15">18</text><text x="750" y="15">19</text></g>
<path d="M442 18.500h5M444.500 16v3M489 18.500h5M491.500 16v3M536 18.500h5M538.500 16v3M583 18.500h5M585.500 16v3M630 18.500h5M632.500 16v3M677 18.500h5M679.500 16v3M724 18.500h5M726.500 16v3" stroke="#222"/>
<path d="M393.500 3.500h8v3l-4 4.500 4 4.500v3h-8v-3l4-4.500-4-4.500zM759.500 18.500v-3l4-4 4 4v3z" fill="#ece9e2" stroke="#111"/>
</svg></div>
<div class="vr"><svg width="23" height="409" viewBox="0 0 23 409">
<defs><pattern id="vt2" y="18.500" width="23" height="37.750" patternUnits="userSpaceOnUse"><path d="M10.500 8.500v1.500M10.500 28v1.500" stroke="#000" stroke-width="1.400"/><path d="M8.500 19h4" stroke="#000" stroke-width="1.400"/></pattern></defs>
<path d="M3 0h15v330H3z" fill="#fff"/><path d="M3 72h15v3H3zM3 200h15v3H3z" fill="#d4d1ca"/><path d="M2.500 330.500h15v40h-15z" fill="#ece9e2" stroke="#aaa79f"/>
<path d="M3 0h15v369H3z" fill="url(#vt2)"/>
<g transform="rotate(-90)"><text x="-19" y="14">19</text><text x="-57" y="14">20</text><text x="-95" y="14">21</text><text x="-132" y="14">22</text><text x="-170" y="14">23</text><text x="-208" y="14">24</text><text x="-246" y="14">25</text><text x="-283" y="14">26</text><text x="-321" y="14">27</text><text x="-359" y="14">28</text></g>
</svg></div>
<div class="canvas"><article class="page">
<table><colgroup><col class="c1"><col></colgroup><tbody><tr class="r1"><td></td><td></td></tr><tr class="r2"><td></td><td><span class="caret"></span></td></tr><tr class="r3"><td></td><td>
<svg class="plan" viewBox="0 0 358 121"><path d="M.5.500h357v120H.5z" fill="#ff9" stroke="#2a2a14"/>
<path d="M.5 19.500h66M.5 38.500h66M.5 57.500h166M33.500 38v19M66.500 0v121M114.500 0v121M166.500 0v121M66.500 27.500h100M66.500 73.500h100M66.500 89.500h100M66.500 105.500h100M177.500 0v100M188.500 61v39M233.500 0v121M249.500 0v121M267.500 0v121M278.500 0v61M323.500 0v121M339.500 0v121M177.500 10.500h90M177.500 20.500h90M177.500 30.500h90M177.500 40.500h90M177.500 50.500h90M278.500 10.500h79M278.500 20.500h79M278.500 30.500h79M278.500 40.500h79M278.500 50.500h79M177.500 60.500h180M188.500 69.500h169M188.500 79.500h169M188.500 89.500h169M166.500 99.500h191M166.500 110.500h191" fill="none" stroke="#2a2a14"/></svg></td></tr></tbody></table>
</article></div>
<div class="vs"><button aria-label="Πάνω"><svg><use href="#arr"/></svg></button><div class="trk"><div class="thumb"></div></div><button aria-label="Κάτω"><svg><use href="#arr"/></svg></button>
<button class="nv" aria-label="Προηγούμενη σελίδα"><svg viewBox="0 0 8 8"><path d="M4 0l2.500 3h-5zM4 4l2.500 3h-5z"/></svg></button><button class="nv" aria-label="Πλοήγηση"><svg viewBox="0 0 8 8"><path d="M0 7c1-4 4-6 7-6v6z" fill="#3f75a8"/><path d="M2 7l3-3" stroke="#cfe1f0"/></svg></button><button class="nv" aria-label="Επόμενη σελίδα"><svg viewBox="0 0 8 8"><path d="M4 4L1.500 1h5zM4 8L1.500 5h5z"/></svg></button></div>
<div class="hs"><button aria-label="Αριστερά"><svg><use href="#arr"/></svg></button><div class="thumb"></div><button aria-label="Δεξιά"><svg><use href="#arr"/></svg></button></div>
</main>
</div>

<footer class="status">
<span class="first">Σελίδα 4 / 4</span><span>Προεπιλογή</span><span class="mid">Ελληνικά</span><span class="mid">INSRT</span><span class="mid">STD</span><span class="mid">*</span><span></span><span class="mid">Πίνακας62:B7</span>
<span class="views"><button aria-label="Μία σελίδα"><svg width="10" height="12"><path d="M.5.500h6l3 3v8h-9z" fill="#b4d0f2" stroke="#2d5f9d"/><path d="M6.500.500v3h3" fill="#fff" stroke="#2d5f9d"/></svg></button><button aria-label="Πολλές σελίδες"><svg width="20" height="12"><path d="M.5.500h5l3 3v8h-8zM10.500.500h5l3 3v8h-8z" fill="#e9eef3" stroke="#8494a3"/><path d="M5.500.500v3h3M15.500.500v3h3" fill="none" stroke="#8494a3"/></svg></button><button aria-label="Βιβλίο"><svg width="18" height="12"><path d="M3.500.500h5v11h-8v-8zM8.500.500h5l3 3v8h-8z" fill="#e9eef3" stroke="#8494a3"/><path d="M3.500.500v3h-3M13.500.500v3h3" fill="none" stroke="#8494a3"/></svg></button></span>
<span class="zoom"><button aria-label="Σμίκρυνση"><svg viewBox="0 0 12 12"><circle cx="6" cy="6" r="5" fill="#d8e8f6" stroke="#4c7399" stroke-width="1.300"/><path d="M3 6h6" stroke="#254f7a" stroke-width="1.500"/></svg></button><input type="range" min="0" max="100" value="50" aria-label="Εστίαση"><button aria-label="Μεγέθυνση"><svg viewBox="0 0 12 12"><circle cx="6" cy="6" r="5" fill="#d8e8f6" stroke="#4c7399" stroke-width="1.300"/><path d="M3 6h6M6 3v6" stroke="#254f7a" stroke-width="1.500"/></svg></button></span>
<span class="pct">100%</span>
</footer>
</body>
</html>
```
FILE: styles.css
```css
* { box-sizing: border-box; }
html, body { height: 100%; margin: 0; }
body { display: flex; flex-direction: column; background: #ece9e2; color: #111; font: 11px/14px "DejaVu Sans", sans-serif; overflow: hidden; }
button, input, select { font: inherit; color: inherit; margin: 0; padding: 0; border: 0; background: none; border-radius: 0; outline: 0; }
svg { display: block; flex: none; }
h1, h2, h3 { margin: 0; font-size: 11px; }
.sprite { display: none; }
.g, .gi, .gn { font-family: "DejaVu Sans", sans-serif; text-anchor: middle; }
.g { font-weight: bold; }
.gi { font-family: "Liberation Serif", serif; font-style: italic; font-weight: bold; }

.menu { display: flex; flex: none; height: 24px; gap: 12px; padding: 0 21px 0 6px; align-items: center; background: linear-gradient(#eeeae4, #e5dfd8); border-bottom: 1px solid #d8d3cb; }
.menu u { text-underline-offset: 2px; }
.update { margin-left: auto; }
.update svg { width: 17px; height: 16px; }

.bar { display: flex; flex: none; height: 31px; padding: 0 0 2px 2px; align-items: center; border-top: 1px solid #faf9f6; border-bottom: 1px solid #d6d2ca; }
.b { display: flex; flex: none; width: 25px; height: 27px; align-items: center; justify-content: center; }
.b svg { width: 16px; height: 16px; }
.b.on { width: 23px; height: 25px; margin: 0 1px; border: 1px solid #8a7f74; border-radius: 3px; background: #dad4ca; box-shadow: inset 0 0 2px #a59c91; }
.a { display: flex; flex: none; width: 17px; height: 27px; align-items: center; justify-content: center; }
.a svg { width: 6px; height: 4px; }
.a:disabled svg { fill: #b5b2ac; }
.bar i { flex: none; width: 8px; height: 14px; background: linear-gradient(#cfcbc3, #cfcbc3) 4px 0 / 1px 100% no-repeat; }
.more { display: flex; align-items: flex-end; justify-content: center; width: 10px; height: 25px; margin: 2px 11px 0 4px; padding-bottom: 4px; background: linear-gradient(#e6e3dc, #aaa7a2); }
.more svg { width: 5px; height: 3px; }

.combo { position: relative; display: flex; flex: none; height: 20px; border: 1px solid #80796f; border-radius: 4px; background: #fff; overflow: hidden; }
.combo select { appearance: none; width: 100%; padding: 0 24px 0 5px; background: linear-gradient(#80796f, #80796f) right 20px top 0 / 1px 100% no-repeat, linear-gradient(#fdfdfb, #e9e5dd) right / 20px 100% no-repeat; }
.combo > svg { position: absolute; right: 7px; top: 8px; width: 7px; height: 4px; pointer-events: none; }
.w-style { width: 135px; margin-left: 11px; }
.w-font { width: 152px; margin-left: 10px; }
.w-size { width: 60px; margin: 0 8px 0 10px; }
.w-sfont { width: 155px; }
.w-ssize { width: 49px; margin-left: 9px; }
.search { width: 97px; }
.search input { width: 75px; padding-left: 5px; color: #888; }
.search input::placeholder { color: #8c8c8c; opacity: 1; }
.search button { display: flex; flex: 1; align-items: center; justify-content: center; border-left: 1px solid #80796f; background: linear-gradient(#fdfdfb, #e9e5dd); }
.search svg { width: 7px; height: 4px; }

.work { display: flex; flex: 1; min-height: 0; }
.side { display: flex; flex: none; width: 282px; border-left: 1px solid #aaa69e; border-bottom: 1px solid #bcb8b0; padding: 2px 0 2px 3px; }
.deck { width: 232px; border: 1px solid #dcd8d1; }
.title { display: flex; align-items: center; justify-content: space-between; height: 29px; padding: 0 5px 0 10px; background: #efece7; }
.title svg { width: 9px; height: 9px; margin-bottom: 3px; }
.sec { display: flex; align-items: center; height: 25px; padding: 0 5px; background: linear-gradient(#dbd7cf, #ece9e2); }
.sec h2 { margin-left: 5px; }
.tog { width: 9px; height: 9px; border: 1px solid #6d8193; background: #fff; color: #234; font-size: 9px; line-height: 6px; }
.dlg { margin-left: auto; padding-bottom: 2px; }
.dlg svg { width: 11px; height: 11px; }
.body { display: flex; flex-direction: column; gap: 6px; padding: 2px 0 1px 7px; }
.body.tight { gap: 1px; padding: 1px 0 3px 7px; }
.row { display: flex; }
.row.top { padding-top: 1px; }
.grp { display: flex; align-items: center; width: max-content; height: 30px; border: 1px solid #e3e0d9; background: #f5f3ee; }
.g9 { margin-left: 9px; }
.g12 { margin-left: 12px; }
.g20 { margin-left: 20px; }
.wide { width: 39px; }
.wide svg { width: 32px; }
.hang { width: 31px; }
.hang svg { width: 20px; }
.cols { display: flex; gap: 8px; }
.col { display: flex; flex-direction: column; gap: 8px; }
.col:first-child { width: 106px; }
.col h3 { height: 12px; line-height: 11px; font-weight: normal; margin-bottom: -8px; }
.fld { display: flex; align-items: center; gap: 6px; height: 19px; }
.fld svg { width: 16px; height: 16px; }
.col:first-child .fld { margin-left: -1px; }
.col:first-child .spin { width: 86px; }
.spin { display: flex; width: 80px; height: 19px; border: 1px solid #80796f; border-radius: 3px; background: #fff; overflow: hidden; }
.spin input { flex: 1; min-width: 0; padding: 0 0 2px 1px; }
.spin span { display: flex; flex-direction: column; width: 13px; border-left: 1px solid #80796f; background: linear-gradient(#f9f8f5, #e1ddd5); }
.spin button { flex: 1; font-size: 6px; line-height: 8px; }
.spin button + button { border-top: 1px solid #aaa69e; }
.tabs { display: flex; flex: 1; flex-direction: column; align-items: center; gap: 4px; padding-top: 13px; border-right: 1px solid #aaa69e; }
.cfg { margin-bottom: 14px; }
.cfg svg { width: 10px; height: 10px; }
.tab { display: flex; width: 31px; height: 31px; align-items: center; justify-content: center; border-radius: 3px; }
.tab.cur { border: 1px solid #bab7b3; background: #e7e4df; }
.tab svg { width: 24px; height: 24px; }
.split { display: flex; align-items: center; width: 6px; }
.split svg { width: 5px; height: 40px; }

.edit { display: grid; flex: 1; min-width: 0; grid-template: 25px minmax(0, 1fr) 15px / 23px minmax(0, 1fr) 17px; border-left: 2px solid #1c1a17; border-top: 2px solid #5c5850; }
.corner { padding: 3px 2px; }
.corner button { width: 16px; height: 16px; border: 1px solid #aaa79f; }
.hr { display: flex; justify-content: center; padding-left: 1px; }
.corner, .hr { border-bottom: 2px solid #55514a; }
.corner { border-bottom-color: transparent; }
.hr text, .vr text { font: 11px "DejaVu Sans", sans-serif; text-anchor: middle; fill: #111; stroke: #fff; stroke-width: 3px; paint-order: stroke; }
.vr text:last-child { stroke: #ece9e2; }
.vr { overflow: hidden; }
.canvas { display: flex; justify-content: center; align-items: flex-start; border-left: 1px solid #222; overflow: hidden; }
.page { flex: none; width: 795px; padding: 0 31px 41px 30px; border-left: 1px solid #000; background: #fff; box-shadow: 3px 3px #000, 1px 3px #000; }
.page table { width: 100%; table-layout: fixed; border-collapse: collapse; }
.page td { padding: 0; border: 1px solid #c4c4c4; vertical-align: top; }
.page .r1 td { border-top: 0; }
.c1 { width: 365px; }
.r1 { height: 73px; }
.r2 { height: 128px; }
.r3 { height: 129px; }
.caret { display: block; width: 2px; height: 11px; margin: 2px auto 0; background: #000; }
.plan { width: 358px; height: 121px; margin: 2px 0 0 4px; }

.vs { grid-area: 1 / 3 / 3 / 4; display: flex; flex-direction: column; width: 14px; }
.vs button, .hs button { display: flex; flex: none; width: 14px; height: 14px; align-items: center; justify-content: center; border: 1px solid #8d877c; background: #f4f2ed; }
.vs svg, .hs svg { width: 7px; height: 4px; }
.vs > button:first-child svg { transform: rotate(180deg); }
.trk { display: flex; flex: 1; align-items: flex-end; border: 1px solid #8d877c; border-width: 0 1px; background: #d6d1c5; }
.thumb { background: linear-gradient(90deg, #fbfaf8, #e4e0d8); }
.trk .thumb { width: 100%; height: 32px; border-top: 1px solid #8d877c; }
.thumb::after { content: ""; display: block; width: 6px; height: 7px; margin: 12px auto; background: repeating-linear-gradient(#b4afa5 0 1px, transparent 1px 3px); }
.vs .nv { height: 12px; margin-top: 2px; border-radius: 3px; }
.vs .nv svg { width: 8px; height: 8px; }
.hs { grid-column: 1 / 3; display: flex; }
.hs .thumb { flex: 1; height: 14px; border: 1px solid #8d877c; border-width: 1px 0; background: linear-gradient(#fbfaf8, #e4e0d8); }
.hs .thumb::after { width: 7px; height: 6px; margin: 3px auto; background: repeating-linear-gradient(90deg, #b4afa5 0 1px, transparent 1px 3px); }
.hs button:first-child svg { transform: rotate(90deg); }
.hs button:last-child svg { transform: rotate(-90deg); }

.status { display: grid; flex: none; height: 22px; align-items: center; grid-template-columns: 228px 227px 209px 43px 35px 20px 28px 1fr 77px 143px 47px; border-top: 1px solid #f7f5f1; }
.status > span { height: 17px; padding-left: 5px; line-height: 17px; border-left: 1px solid #aaa69e; }
.status > .first { padding-left: 10px; border: 0; }
.status > .mid { padding: 0; text-align: center; }
.status > .views { display: flex; align-items: center; gap: 5px; padding-left: 7px; }
.status > .zoom { display: flex; align-items: center; gap: 5px; padding-right: 8px; }
.zoom svg { width: 12px; height: 12px; }
.zoom input { appearance: none; flex: 1; min-width: 0; height: 12px; background: linear-gradient(#8d8a84, #8d8a84) 8px 0 / 1px 100% no-repeat, linear-gradient(#99958d, #99958d) 0 5px / 100% 2px no-repeat; }
.zoom input::-webkit-slider-thumb { appearance: none; width: 9px; height: 9px; border: 1px solid #2b5169; border-radius: 5px; background: #5c92b4; }
.status > .pct { padding-left: 3px; }
```
